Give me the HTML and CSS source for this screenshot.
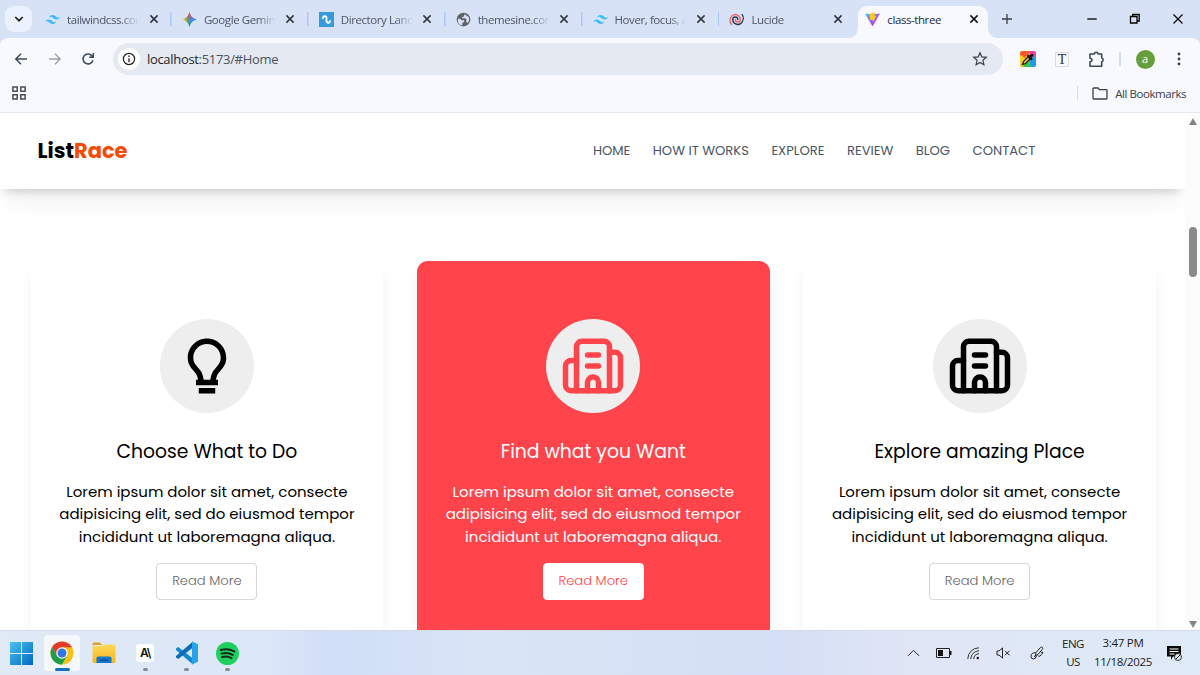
FILE: index.html
```html
<!DOCTYPE html>
<html lang="en">
<head>
    <meta charset="UTF-8">
    <meta name="viewport" content="width=device-width, initial-scale=1.0">
    <title>class-three</title>
    <link rel="stylesheet" href="styles.css">
</head>
<body>
    <!-- shared shapes -->
    <svg class="defs" width="0" height="0">
        <defs>
            <symbol id="close" viewBox="0 0 10 10"><path d="M1.4 1.4l7.2 7.2M8.6 1.4L1.4 8.6" fill="none" stroke="currentColor" stroke-width="1.5"/></symbol>
            <symbol id="tailwind" viewBox="0 0 54 33"><path fill="#38bdf8" d="M27 0c-7.2 0-11.7 3.6-13.5 10.8 2.7-3.6 5.85-4.95 9.45-4.05 2.054.513 3.522 2.004 5.147 3.653C30.744 13.09 33.808 16.2 40.5 16.2c7.2 0 11.7-3.6 13.5-10.8-2.7 3.6-5.85 4.95-9.45 4.05-2.054-.513-3.522-2.004-5.147-3.653C36.756 3.11 33.692 0 27 0zM13.5 16.2C6.3 16.2 1.8 19.8 0 27c2.7-3.6 5.85-4.95 9.45-4.05 2.054.514 3.522 2.004 5.147 3.653C17.244 29.29 20.308 32.4 27 32.4c7.2 0 11.7-3.6 13.5-10.8-2.7 3.6-5.85 4.95-9.45 4.05-2.054-.513-3.522-2.004-5.147-3.653C23.256 19.31 20.192 16.2 13.5 16.2z"/></symbol>
            <symbol id="building" viewBox="0 0 24 24"><g fill="none" stroke="currentColor" stroke-width="2" stroke-linecap="round" stroke-linejoin="round"><path d="M10 12h4M10 8h4M14 21v-3a2 2 0 0 0-4 0v3"/><path d="M6 10H4a2 2 0 0 0-2 2v7a2 2 0 0 0 2 2h16a2 2 0 0 0 2-2V9a2 2 0 0 0-2-2h-2"/><path d="M6 21V5a2 2 0 0 1 2-2h8a2 2 0 0 1 2 2v16"/></g></symbol>
            <linearGradient id="gem" x1="0" y1="0" x2="1" y2="0"><stop offset=".1" stop-color="#f6c21c"/><stop offset=".4" stop-color="#5d9c76"/><stop offset=".6" stop-color="#3f86f4"/></linearGradient>
            <linearGradient id="gem2" x1=".5" y1="0" x2=".5" y2="1"><stop offset=".08" stop-color="#ee4438"/><stop offset=".5" stop-color="#ee4438" stop-opacity="0"/><stop offset=".6" stop-color="#16a765" stop-opacity="0"/><stop offset="1" stop-color="#16a765"/></linearGradient>
            <linearGradient id="vite" x1="0" y1="0" x2="1" y2="1"><stop offset="0" stop-color="#41c8ff"/><stop offset=".6" stop-color="#a44bf5"/><stop offset="1" stop-color="#bd34fe"/></linearGradient>
            <linearGradient id="win" x1="0" y1="0" x2="1" y2="1"><stop offset="0" stop-color="#4cc2f1"/><stop offset="1" stop-color="#0067c0"/></linearGradient>
            <linearGradient id="folder" x1="0" y1="0" x2="0" y2="1"><stop offset="0" stop-color="#ffd85c"/><stop offset="1" stop-color="#f5b620"/></linearGradient>
        </defs>
    </svg>

    <header class="tabs">
        <button class="tab-search"><svg width="10" height="8" viewBox="0 0 10 8"><path d="M1.3 2L5 5.7 8.7 2" fill="none" stroke="#1f1f1f" stroke-width="1.7"/></svg></button>
        <div class="tab">
            <svg class="favicon" width="15" height="15"><use href="#tailwind"/></svg>
            <span class="tab-title">tailwindcss.com</span>
            <svg class="close" width="10" height="10"><use href="#close"/></svg>
        </div>
        <div class="tab">
            <svg class="favicon" width="15" height="15" viewBox="0 0 16 16"><path fill="url(#gem)" d="M8 0c.8 4.5 3.5 7.2 8 8-4.5.8-7.2 3.5-8 8-.8-4.5-3.5-7.2-8-8 4.5-.8 7.2-3.5 8-8z"/><path fill="url(#gem2)" d="M8 0c.8 4.5 3.5 7.2 8 8-4.5.8-7.2 3.5-8 8-.8-4.5-3.5-7.2-8-8 4.5-.8 7.2-3.5 8-8z"/></svg>
            <span class="tab-title">Google Gemini</span>
            <svg class="close" width="10" height="10"><use href="#close"/></svg>
        </div>
        <div class="tab">
            <svg class="favicon" width="15" height="15" viewBox="0 0 15 15"><rect width="15" height="15" fill="#369bdc"/><path d="M4 6.2c0-2.6 3.5-2.6 3.5 0v2.6c0 2.6 3.5 2.6 3.5 0" fill="none" stroke="#fff" stroke-width="1.8" stroke-linecap="round"/></svg>
            <span class="tab-title">Directory Landing</span>
            <svg class="close" width="10" height="10"><use href="#close"/></svg>
        </div>
        <div class="tab">
            <svg class="favicon" width="15" height="15" viewBox="0 0 24 24"><path fill="#5f6368" d="M12 1a11 11 0 1 0 0 22 11 11 0 0 0 0-22zm-9 11 .1-1.5 3.9.5 2 2h4v3l-3 1v4.5A9 9 0 0 1 3 12zm16 5.5-3-2.5 1-3-2-2h-5V8l3-1V4l3 .5 1 2.5 2-.5c3 3.5 2.5 8 0 11z"/></svg>
            <span class="tab-title">themesine.com</span>
            <svg class="close" width="10" height="10"><use href="#close"/></svg>
        </div>
        <div class="tab">
            <svg class="favicon" width="15" height="15"><use href="#tailwind"/></svg>
            <span class="tab-title">Hover, focus, and</span>
            <svg class="close" width="10" height="10"><use href="#close"/></svg>
        </div>
        <div class="tab tab-last">
            <svg class="favicon" width="15" height="15" viewBox="0 0 24 24" fill="none" stroke-width="2.2" stroke-linecap="round"><path stroke="#2d3748" d="M14 12a4 4 0 0 0-8 0 8 8 0 0 0 13 6.2A11 11 0 0 0 21 4"/><path stroke="#f56565" d="M10 12a4 4 0 0 0 8 0A8 8 0 0 0 4.5 6.2 11 11 0 0 0 4 20"/></svg>
            <span class="tab-title">Lucide</span>
            <svg class="close" width="10" height="10"><use href="#close"/></svg>
        </div>
        <div class="tab active">
            <svg class="favicon" width="15" height="15" viewBox="0 0 16 16"><path fill="url(#vite)" d="M0 1.5l6 .8h4l6-.8-8 14z"/><path fill="#ffc81f" d="M4.8 1.8L11 .5l-.7 3.7 2-.3L8.2 11.500l.2-3.300-2.900.5z"/></svg>
            <span class="tab-title">class-three</span>
            <svg class="close" width="10" height="10"><use href="#close"/></svg>
        </div>
        <svg class="new-tab" width="12" height="12" viewBox="0 0 12 12"><path d="M6 1v10M1 6h10" stroke="#3c4043" stroke-width="1.3"/></svg>
        <div class="window-buttons">
            <svg width="12" height="12" viewBox="0 0 12 12"><path d="M1.3 6h9.4" stroke="#000" stroke-width="1.3"/></svg>
            <svg width="12" height="12" viewBox="0 0 12 12"><path d="M1.5 3.5H8V10H1.500zM3.700 3V1.500h6.500V8H8.500" fill="none" stroke="#000" stroke-width="1.3"/></svg>
            <svg width="12" height="12" viewBox="0 0 12 12"><path d="M1.5 1.5l9 9M10.5 1.5l-9 9" stroke="#000" stroke-width="1.2"/></svg>
        </div>
    </header>

    <div class="toolbar">
        <div class="nav-buttons">
            <svg width="14" height="14" viewBox="0 0 14 14"><path d="M13 7H2M7 1.8L1.8 7 7 12.2" fill="none" stroke="#3c4a5c" stroke-width="1.5"/></svg>
            <svg width="14" height="14" viewBox="0 0 14 14"><path d="M1 7h11M7 1.8L12.2 7 7 12.2" fill="none" stroke="#9a9fa8" stroke-width="1.3"/></svg>
            <svg width="14" height="14" viewBox="0 0 14 14"><path d="M11.9 8.2A5 5 0 1 1 10.9 3.7L12 4.9M12.3 1v4.2H8.1" fill="none" stroke="#3c4a5c" stroke-width="1.5"/></svg>
        </div>
        <div class="address">
            <span class="info"><svg width="14" height="14" viewBox="0 0 14 14"><circle cx="7" cy="7" r="5.6" fill="none" stroke="#1f1f1f" stroke-width="1.2"/><path d="M7 6.2v4M7 3.6V5" stroke="#1f1f1f" stroke-width="1.3"/></svg></span>
            <span class="url"><b>localhost</b>:5173/#Home</span>
            <svg class="star" width="16" height="16" viewBox="0 0 16 16"><path d="M8 1.8l1.8 4.1 4.5.4-3.4 3 1 4.4L8 11.4l-3.9 2.3 1-4.4-3.4-3 4.5-.4z" fill="none" stroke="#3c4043" stroke-width="1.2"/></svg>
        </div>
        <div class="extensions">
            <svg width="16" height="16" viewBox="0 0 16 16"><rect width="16" height="16" rx="2" fill="#ffc400"/><path d="M1.5 0H11L5 7 0 4V1.5z" fill="#ff5a2c"/><path d="M9 0h5.5L16 1.5V6h-5z" fill="#ef3fa6"/><path d="M0 4l6 4-3 8-3-2z" fill="#ffd21e"/><path d="M3 16l4-7 5 7z" fill="#32c54b"/><path d="M8 8l8-3v9.5L14.500 16H11z" fill="#1f9cf0"/><path d="M2.500 13.500l1-3 5-5 2 2-5 5z" fill="#ffc95a" stroke="#111" stroke-width="1.2"/><path d="M8.500 5l2.700 2.700M10.200 6L12 4.200" stroke="#111" stroke-width="2.8" stroke-linecap="round"/></svg>
            <span class="ext-text">T</span>
            <svg width="17" height="17" viewBox="0 0 17 17"><path d="M2 3h4.400a1.800 1.800 0 0 1 3.600 0h3.700v4a1.900 1.900 0 0 1 0 3.700v4.500H2v-4.300c2.700-.4 2.700-3.300 0-3.700z" fill="none" stroke="#3c4a5c" stroke-width="1.6" stroke-linejoin="round"/></svg>
            <i class="divider"></i>
            <span class="avatar">a</span>
            <svg width="4" height="14" viewBox="0 0 4 14" fill="#3c4043"><circle cx="2" cy="2" r="1.4"/><circle cx="2" cy="7" r="1.4"/><circle cx="2" cy="12" r="1.4"/></svg>
        </div>
    </div>

    <div class="bookmarks">
        <svg width="14" height="14" viewBox="0 0 14 14"><path d="M.9.9h4.300v4.300H.9zM8.800.9h4.300v4.300H8.800zM.9 8.800h4.300v4.300H.9zM8.800 8.800h4.300v4.300H8.800z" fill="none" stroke="#4a4d51" stroke-width="1.5"/></svg>
        <div class="all-bookmarks">
            <i class="divider"></i>
            <svg width="16" height="13" viewBox="0 0 16 13"><path d="M1.700 1H6l1.500 1.600h6.800q.7 0 .7.700v8q0 .7-.7.700H1.700q-.7 0-.7-.7V1.700Q1 1 1.700 1z" fill="none" stroke="#3c4043" stroke-width="1.3"/></svg>
            <span>All Bookmarks</span>
        </div>
    </div>

    <div class="viewport">
        <main class="page">
            <nav class="navbar">
                <a class="logo">List<span>Race</span></a>
                <ul class="menu">
                    <li>HOME</li>
                    <li>HOW IT WORKS</li>
                    <li>EXPLORE</li>
                    <li>REVIEW</li>
                    <li>BLOG</li>
                    <li>CONTACT</li>
                </ul>
            </nav>
            <section class="cards">
                <article class="card">
                    <div class="card-icon"><svg width="66" height="66" viewBox="0 0 24 24"><path fill="currentColor" d="M9 20h6v2H9zm7.906-6.288C17.936 12.506 19 11.259 19 9c0-3.859-3.141-7-7-7S5 5.141 5 9c0 2.285 1.067 3.528 2.101 4.730.358.418.729.851 1.084 1.349.144.206.38.996.591 1.921H8v2h8v-2h-.774c.213-.927.45-1.719.593-1.925.352-.503.726-.94 1.087-1.363zm-2.724.213c-.434.617-.796 2.075-1.006 3.075h-2.351c-.209-1.002-.572-2.463-1.011-3.080a20.502 20.502 0 0 0-1.196-1.492C7.644 11.294 7 10.544 7 9c0-2.757 2.243-5 5-5s5 2.243 5 5c0 1.521-.643 2.274-1.615 3.413-.373.438-.796.933-1.203 1.512z"/></svg></div>
                    <h3>Choose What to Do</h3>
                    <p>Lorem ipsum dolor sit amet, consecte<br>adipisicing elit, sed do eiusmod tempor<br>incididunt ut laboremagna aliqua.</p>
                    <button>Read More</button>
                </article>
                <article class="card red">
                    <div class="card-icon"><svg width="66" height="66"><use href="#building"/></svg></div>
                    <h3>Find what you Want</h3>
                    <p>Lorem ipsum dolor sit amet, consecte<br>adipisicing elit, sed do eiusmod tempor<br>incididunt ut laboremagna aliqua.</p>
                    <button>Read More</button>
                </article>
                <article class="card">
                    <div class="card-icon"><svg width="66" height="66"><use href="#building"/></svg></div>
                    <h3>Explore amazing Place</h3>
                    <p>Lorem ipsum dolor sit amet, consecte<br>adipisicing elit, sed do eiusmod tempor<br>incididunt ut laboremagna aliqua.</p>
                    <button>Read More</button>
                </article>
            </section>
        </main>
        <div class="scrollbar">
            <i class="arrow up"></i>
            <i class="thumb"></i>
            <i class="arrow down"></i>
        </div>
    </div>

    <footer class="taskbar">
        <div class="apps">
            <span class="app"><svg width="23" height="23" viewBox="0 0 23 23" fill="url(#win)"><path d="M0 0h11v11H0zM12 0h11v11H12zM0 12h11v11H0zM12 12h11v11H12z"/></svg></span>
            <span class="app current"><svg width="24" height="24" viewBox="0 0 48 48"><circle cx="24" cy="24" r="23" fill="#fbc116"/><path fill="#e33b2e" d="M4.100 12.500a23 23 0 0 1 39.800 0H24L14 29.800z"/><path fill="#1a9e4b" d="M4.100 12.500a23 23 0 0 0 19.900 34.500l10-17.300L14 29.800z"/><circle cx="24" cy="24" r="11.5" fill="#fff"/><circle cx="24" cy="24" r="9" fill="#3275e5"/></svg></span>
            <span class="app"><svg width="24" height="22" viewBox="0 0 24 22"><path d="M.5 2Q.5.5 2 .5h6L10 3H.5z" fill="#dba01c"/><path d="M.5 4H9l2-1.500h11q1.500 0 1.500 1.500v15.500q0 1.500-1.500 1.500H2Q.5 21 .5 19.500z" fill="url(#folder)"/><path d="M4.500 21v-4.500q0-2 2-2h11q2 0 2 2V21z" fill="#1577c7"/><path d="M8 18.200h8" stroke="#0c4f94" stroke-width="1.4"/></svg></span>
            <span class="app running"><span class="ai">A\</span></span>
            <span class="app running"><svg width="24" height="24" viewBox="0 0 24 24"><path d="M1 7.400l2.200-1.500L18 17.500v6L1 9z" fill="#1587cf"/><path d="M1 16.600l2.200 1.500L18 6.500v-6L1 15z" fill="#0a6db5"/><path d="M17 .5l6 2.700v17.600l-6 2.700z" fill="#29a3ec"/></svg></span>
            <span class="app running"><svg width="23" height="23" viewBox="0 0 24 24"><circle cx="12" cy="12" r="12" fill="#1ed05e"/><path d="M5 8.300q7.500-2.200 14 1.500M5.700 12.100q6.300-1.800 11.800 1.300M6.400 15.600q5.200-1.400 9.800 1.200" fill="none" stroke="#142a1b" stroke-width="2.1" stroke-linecap="round"/></svg></span>
        </div>
        <div class="tray">
            <svg width="13" height="8" viewBox="0 0 13 8"><path d="M1 6.800l5.500-5.500L12 6.800" fill="none" stroke="#222" stroke-width="1"/></svg>
            <svg width="16" height="10" viewBox="0 0 16 10"><path d="M.5.5h13v9H.5z" fill="none" stroke="#222"/><path d="M2 2h5v6H2zM14 3h1.500v4H14z" fill="#111"/></svg>
            <svg width="13" height="13" viewBox="0 0 13 13"><path d="M.8 12A11.200 11.200 0 0 1 12 .8M3.800 12A8.200 8.200 0 0 1 12 3.800M6.700 12A5.300 5.300 0 0 1 12 6.700" fill="none" stroke="#333" stroke-width="1"/><circle cx="10.8" cy="11" r="1.2" fill="#111"/></svg>
            <svg width="15" height="12" viewBox="0 0 15 12"><path d="M1 4h2L6.500.9v10.200L3 8H1zM9 3.800l4.500 4.500M13.500 3.800L9 8.300" fill="none" stroke="#222" stroke-width="1"/></svg>
            <svg width="14" height="14" viewBox="0 0 14 14"><path d="M5.500 9.500L6 6.500l4.500-5q1.300-1 2 0t-.5 2.200L8 8.500zM5.500 6.500Q1 7 1 10.200q0 2.800 2.500 2.800Q6 13 6.500 9.500M4 10.500l2-1M8 9.500q.5 1.500 2 .5t3-3.500q-1-1-2 0" fill="none" stroke="#222" stroke-width="1"/></svg>
            <span class="lang">ENG<br>US</span>
            <span class="clock">3:47 PM<br>11/18/2025</span>
            <svg width="17" height="17" viewBox="0 0 17 17"><path d="M1 1h14v10.500H7L5 15v-3.500H1z" fill="#080808"/><path d="M3.500 4h9M3.500 6.500h9M3.500 9h5" stroke="#fff"/><circle cx="12" cy="12" r="3.5" fill="#dfe9f6" stroke="#222" stroke-width=".9"/><path d="M10 14l4-4" stroke="#222"/></svg>
        </div>
    </footer>
</body>
</html>
```
FILE: styles.css
```css
* {
    box-sizing: border-box;
}

body {
    margin: 0;
    width: 1200px;
    height: 675px;
    overflow: hidden;
    display: flex;
    flex-direction: column;
    background-color: #d8e2f7;
    font-family: "Segoe UI", "Open Sans", sans-serif;
    color: #3c4043;
}

svg {
    flex-shrink: 0;
}

.defs {
    position: absolute;
}

/* browser tabs */
.tabs {
    display: flex;
    align-items: center;
    height: 38px;
    flex-shrink: 0;
    padding-left: 5px;
}

.tab-search {
    display: flex;
    align-items: center;
    justify-content: center;
    width: 27px;
    height: 26px;
    margin: 0 3px 0 0;
    padding: 0;
    border: none;
    border-radius: 9px;
    background-color: #ebf1fd;
}

.tab {
    display: flex;
    align-items: center;
    width: 136.9px;
    height: 38px;
    padding-left: 10px;
    background: linear-gradient(#a8c7fa, #a8c7fa) 135px 12px / 1.5px 14px no-repeat;
}

.tab-last {
    background: none;
}

.tab-title {
    width: 72px;
    margin-left: 7px;
    overflow: hidden;
    white-space: nowrap;
    font-size: 11.5px;
    letter-spacing: -0.42px;
    color: #4b5565;
    -webkit-mask-image: linear-gradient(90deg, #000 75%, transparent);
    mask-image: linear-gradient(90deg, #000 75%, transparent);
}

.close {
    margin-left: 9.5px;
    color: #2d3540;
}

.tab.active {
    position: relative;
    width: 130px;
    height: 32px;
    margin: 6px 0 0 2px;
    padding: 0 0 6px 7px;
    border-radius: 9px 9px 0 0;
    background: #f8f9fe;
}

.tab.active::before,
.tab.active::after {
    content: "";
    position: absolute;
    bottom: 0;
    left: -9px;
    width: 9px;
    height: 9px;
    background: radial-gradient(circle at 0 0, transparent 8.5px, #f8f9fe 9px);
}

.tab.active::after {
    left: auto;
    right: -9px;
    background: radial-gradient(circle at 100% 0, transparent 8.5px, #f8f9fe 9px);
}

.active .tab-title {
    color: #1f2937;
    -webkit-mask-image: none;
    mask-image: none;
}

.active .close {
    color: #111;
}

.new-tab {
    margin-left: 13px;
}

.window-buttons {
    display: flex;
    gap: 31px;
    margin-left: auto;
    padding-right: 16px;
}

/* toolbar */
.toolbar {
    display: flex;
    align-items: center;
    height: 42px;
    flex-shrink: 0;
    background-color: #f8f9fe;
    border-radius: 8px 8px 0 0;
}

.nav-buttons {
    display: flex;
    gap: 19.5px;
    width: 113px;
    padding-left: 14px;
}

.address {
    display: flex;
    align-items: center;
    width: 890px;
    height: 32px;
    padding: 0 15px 0 5px;
    border-radius: 16px;
    background-color: #e5e9f2;
}

.info {
    display: flex;
    align-items: center;
    justify-content: center;
    width: 22px;
    height: 22px;
    border-radius: 50%;
    background-color: #fff;
}

.url {
    margin-left: 7px;
    font-size: 13px;
    letter-spacing: -0.32px;
    color: #4b5260;
}

.url b {
    font-weight: normal;
    color: #1f1f1f;
}

.star {
    margin-left: auto;
}

.extensions {
    display: flex;
    align-items: center;
    padding-left: 17px;
}

.ext-text {
    width: 12px;
    height: 13px;
    margin: 0 20px 0 20px;
    outline: 1px solid #dcdcdc;
    font: 14px/13px "Liberation Serif", serif;
    text-align: center;
    color: #333;
}

.divider {
    width: 1.5px;
    height: 14px;
    background-color: #d3def5;
}

.extensions .divider {
    margin: 0 15px 0 14px;
}

.avatar {
    width: 19px;
    height: 19px;
    margin-right: 22px;
    border-radius: 50%;
    background-color: #669f3a;
    color: #fff;
    font-size: 11px;
    line-height: 18px;
    text-align: center;
}

.bookmarks {
    display: flex;
    align-items: center;
    justify-content: space-between;
    height: 33px;
    flex-shrink: 0;
    padding: 0 14px 6px 12px;
    background-color: #f8f9fe;
    border-bottom: 1px solid #e3e8f1;
}

.all-bookmarks {
    display: flex;
    align-items: center;
    font-size: 11.5px;
    letter-spacing: -0.45px;
}

.all-bookmarks svg {
    margin: 0 7px 0 14px;
}

/* web page */
.viewport {
    display: flex;
    height: 517px;
    flex-shrink: 0;
    overflow: hidden;
    background-color: #fff;
}

.page {
    width: 1185px;
    color: #000;
    font-family: "Poppins", "Inter", sans-serif;
}

.navbar {
    display: flex;
    justify-content: space-between;
    align-items: center;
    width: 1185px;
    height: 76px;
    padding: 0 149.7px 0 37.5px;
    background-color: #fff;
    box-shadow: 0 19px 23px -5px rgba(0, 0, 0, 0.05), 0 7px 9px -5px rgba(0, 0, 0, 0.18);
}

.logo {
    margin-top: -2px;
    font-size: 21px;
    font-weight: 700;
}

.logo span {
    color: #f54a00;
}

.menu {
    display: flex;
    gap: 22.5px;
    margin: 0;
    padding: 0;
    list-style: none;
    font-size: 13.125px;
    color: #4a5565;
}

.cards {
    display: grid;
    grid-template-columns: repeat(3, 1fr);
    gap: 33.5px;
    padding: 71.7px 29px 0 30.5px;
}

.card {
    display: flex;
    flex-direction: column;
    align-items: center;
    height: 420px;
    padding-top: 58.7px;
    border-radius: 11px;
    text-align: center;
    box-shadow: 0 9px 14px rgba(0, 0, 0, 0.055);
}

.card-icon {
    display: flex;
    align-items: center;
    justify-content: center;
    width: 94px;
    height: 94px;
    border-radius: 50%;
    background-color: #eee;
}

.card h3 {
    margin: 23px 0 0;
    font-size: 18.75px;
    line-height: 32px;
    font-weight: 400;
}

.card p {
    margin: 12.6px 0 0;
    font-size: 15px;
    line-height: 22.5px;
    white-space: nowrap;
}

.card button {
    width: 101px;
    height: 37px;
    margin-top: 14.5px;
    padding: 0;
    border: 1px solid #d6d6d6;
    border-radius: 4px;
    background-color: #fff;
    color: #666;
    font-family: inherit;
    font-size: 13.125px;
    font-weight: 300;
}

.card.red {
    background-color: #ff444b;
    color: #fff;
}

.red .card-icon,
.red button {
    color: #ff444b;
}

.red button {
    border-color: #fff;
}

.scrollbar {
    display: flex;
    flex-direction: column;
    align-items: center;
    width: 15px;
    padding: 5px 0 2px;
    background-color: #fcfcfc;
}

.arrow {
    border: 4.5px solid transparent;
}

.arrow.up {
    border-top: 0;
    border-bottom: 7px solid #858585;
}

.arrow.down {
    margin-top: auto;
    border-bottom: 0;
    border-top: 7px solid #858585;
}

.thumb {
    width: 8px;
    height: 50px;
    margin-top: 102px;
    border-radius: 4px;
    background-color: #8a8a8a;
}

/* taskbar */
.taskbar {
    display: flex;
    justify-content: space-between;
    height: 45px;
    background: linear-gradient(90deg, #e0e9f6, #dce7f8 22%, #d0def7 28%, #d9e5f6 40%, #d5dff5 65%, #dfe6f6 76%, #dfeaf8);
    border-top: 1px solid #d5dce8;
}

.apps {
    display: flex;
    align-items: center;
    gap: 5.4px;
    padding-left: 3px;
}

.app {
    position: relative;
    display: flex;
    align-items: center;
    justify-content: center;
    width: 36px;
    height: 36px;
    border-radius: 4px;
}

.app.current {
    background-color: #f4f7fc;
}

.running::after,
.current::after {
    content: "";
    position: absolute;
    bottom: 0;
    width: 5px;
    height: 3px;
    border-radius: 2px;
    background-color: #858b94;
}

.current::after {
    width: 15px;
    background-color: #1272bd;
}

.ai {
    width: 18px;
    height: 18px;
    border-radius: 3px;
    background-color: #fff;
    color: #111;
    font: 600 12px/18px Inter, sans-serif;
    letter-spacing: -1px;
    text-align: center;
}

.tray {
    display: flex;
    align-items: center;
    padding-right: 17px;
    color: #1b1b1b;
    font-size: 11.5px;
    line-height: 18px;
    text-align: center;
}

.tray svg {
    margin-right: 15.5px;
}

.tray svg:nth-of-type(5) {
    margin: 0 18px 0 4px;
}

.tray svg:last-child {
    margin-right: 0;
}

.lang {
    width: 22px;
    letter-spacing: -0.5px;
}

.clock {
    width: 60px;
    margin: -2px 13px 0 9px;
    letter-spacing: -0.3px;
    line-height: 19px;
    white-space: nowrap;
}
```
